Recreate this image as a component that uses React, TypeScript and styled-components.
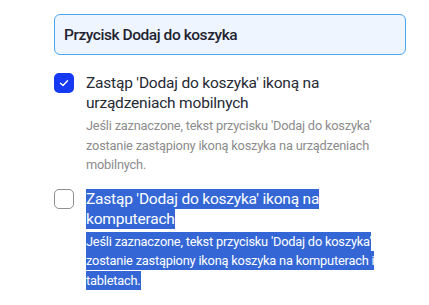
import React from 'react'
import { styled, createGlobalStyle } from 'styled-components'

const Global = createGlobalStyle`
  body {
    margin: 0;
    background: #ffffff;
    font-family: Roboto, "Noto Sans", sans-serif;
  }
`

const options = [
  {
    title: "Zastąp 'Dodaj do koszyka' ikoną na urządzeniach mobilnych",
    desc: "Jeśli zaznaczone, tekst przycisku 'Dodaj do koszyka' zostanie zastąpiony ikoną koszyka na urządzeniach mobilnych.",
    checked: true,
    selected: false,
  },
  {
    title: "Zastąp 'Dodaj do koszyka' ikoną na komputerach",
    desc: "Jeśli zaznaczone, tekst przycisku 'Dodaj do koszyka' zostanie zastąpiony ikoną koszyka na komputerach i tabletach.",
    checked: false,
    selected: true,
  },
]

const App = () => {
  return (
    <Page>
      <Global />
      <Field>Przycisk Dodaj do koszyka</Field>
      <List>
        {options.map((o) => (
          <Option key={o.title}>
            <Box $checked={o.checked}>
              {o.checked && (
                <svg width="12" height="12" viewBox="0 0 12 12" fill="none">
                  <path d="M2.5 6.2 L5 8.5 L9.5 3.8" stroke="#fff" strokeWidth="1.4" strokeLinecap="round" strokeLinejoin="round" />
                </svg>
              )}
            </Box>
            <Texts>
              <Title><Sel $on={o.selected}>{o.title}</Sel></Title>
              <Desc><Sel $on={o.selected} $small>{o.desc}</Sel></Desc>
            </Texts>
          </Option>
        ))}
      </List>
    </Page>
  )
}

export default App

const Page = styled.div`
  width: 352px;
  padding: 14px 0 0 54px;
`
const Field = styled.div`
  box-sizing: border-box;
  height: 41px;
  display: flex;
  align-items: center;
  padding: 0 9px;
  border: 1px solid #4aa6f2;
  border-radius: 6px;
  background: #eef5ff;
  color: #1f2430;
  font-size: 15.5px;
  font-weight: 500;
  letter-spacing: -0.45px;
`
const List = styled.div`
  display: flex;
  flex-direction: column;
  gap: 14px;
  margin-top: 18px;
`
const Option = styled.div`
  display: flex;
  gap: 12px;
  align-items: flex-start;
`
const Box = styled.div<{ $checked: boolean }>`
  box-sizing: border-box;
  flex: none;
  width: 20px;
  height: 20px;
  border-radius: 5px;
  display: flex;
  align-items: center;
  justify-content: center;
  background: ${(p) => (p.$checked ? '#1639f3' : '#fff')};
  border: ${(p) => (p.$checked ? 'none' : '1.5px solid #8e8e93')};
`
const Texts = styled.div`
  flex: 1;
  display: flex;
  flex-direction: column;
  gap: 3px;
`
const Title = styled.div`
  font-size: 15.5px;
  line-height: 20px;
  color: #262a33;
  letter-spacing: -0.2px;
`
const Desc = styled.div`
  font-size: 12.8px;
  line-height: 19.5px;
  color: #8c8c8c;
  letter-spacing: -0.2px;
`
const Sel = styled.span<{ $on: boolean; $small?: boolean }>`
  background: ${(p) => (p.$on ? '#3467d5' : 'transparent')};
  color: ${(p) => (p.$on ? '#ffffff' : 'inherit')};
  padding: ${(p) => (p.$small ? '2px 0' : '1px 0')};
`
